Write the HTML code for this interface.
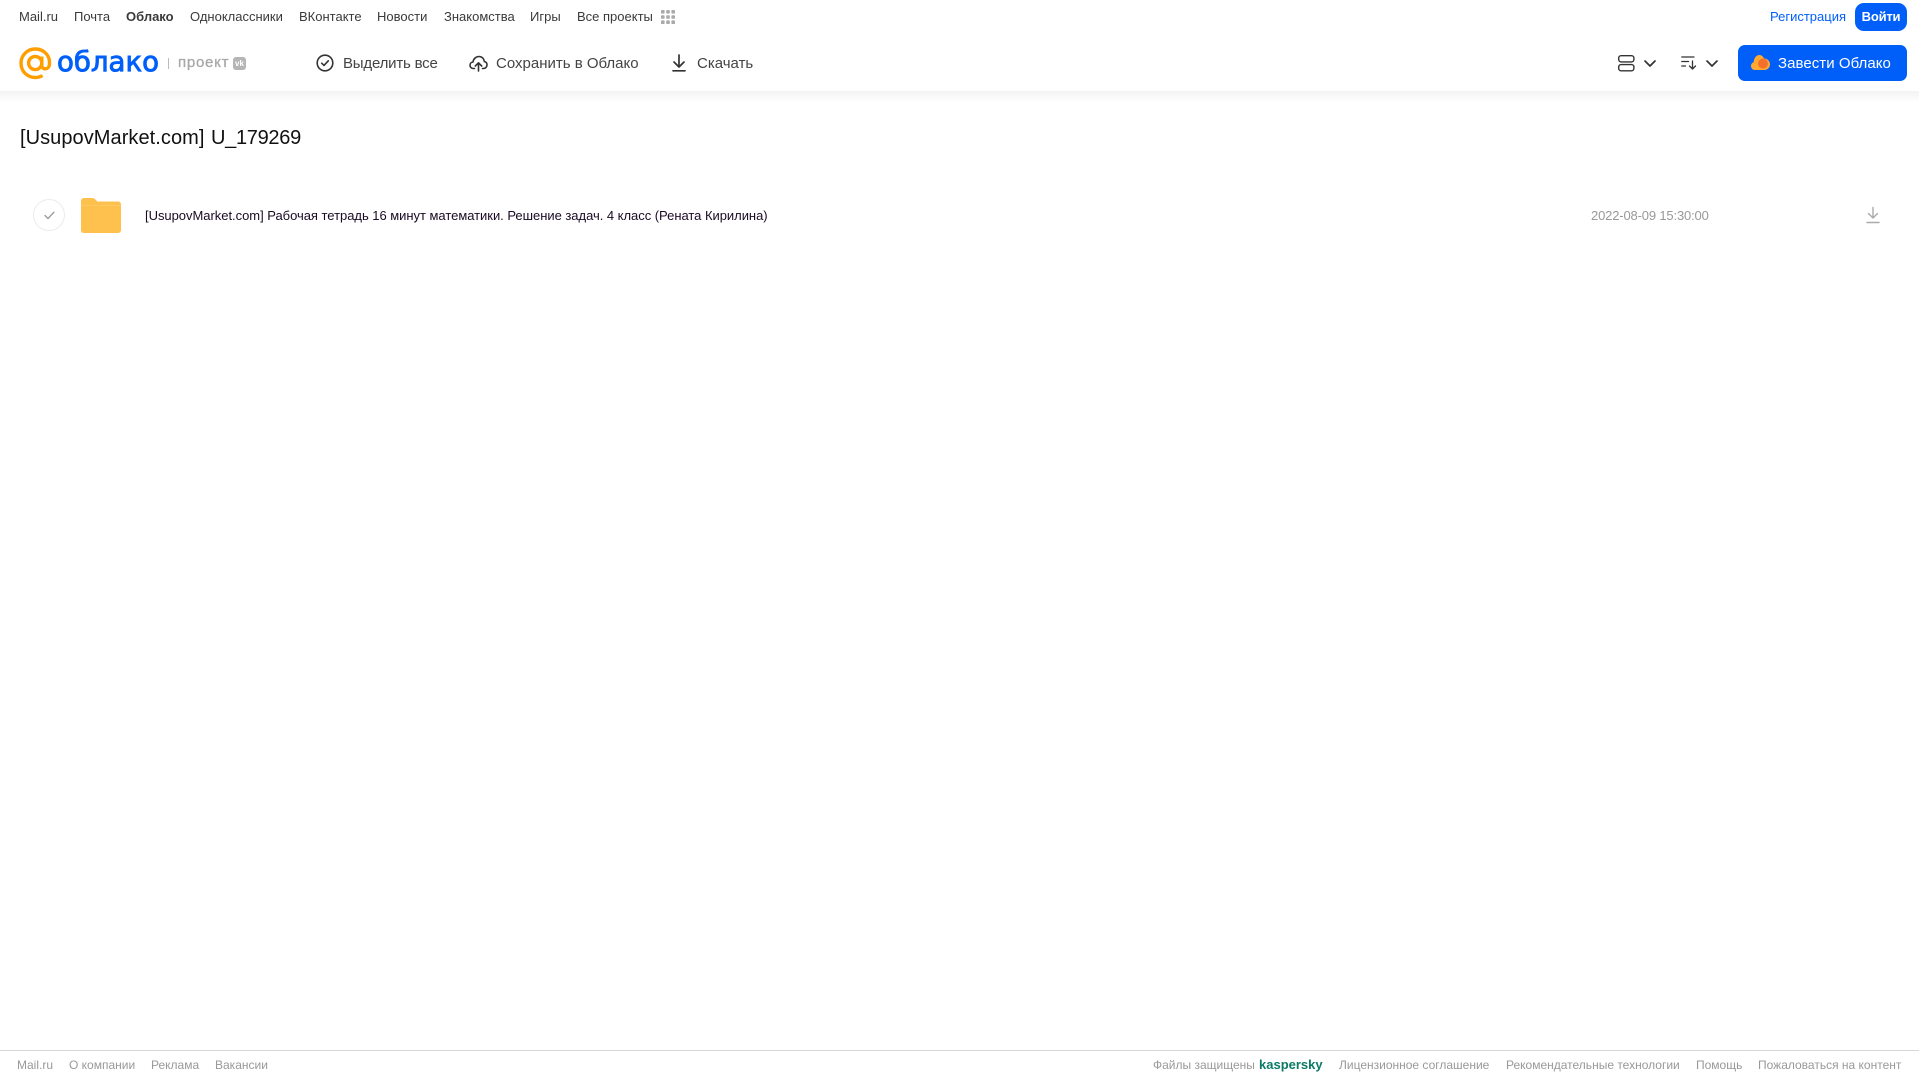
<!DOCTYPE html>
<html lang="ru">
<head>
<meta charset="utf-8">
<title>Облако</title>
<style>
html,body{margin:0;padding:0;background:#fff;}
body{width:1919px;height:1079px;position:relative;overflow:hidden;font-family:"Liberation Sans",Arial,sans-serif;}
.t{position:absolute;white-space:nowrap;line-height:20px;height:20px;}
.n{top:7px;font-size:13px;color:#3a3a3a;}
.b{top:54px;font-size:15px;color:#444;}
.f{top:1055px;font-size:12px;color:#999;}
svg{position:absolute;overflow:visible;}
</style>
</head>
<body>
<div style="position:absolute;left:0;top:91px;width:1919px;height:12px;background:linear-gradient(#f3f3f3,#fff);"></div>

<span class="t n" style="left:19px">Mail.ru</span>
<span class="t n" style="left:74px">Почта</span>
<span class="t n" style="left:126px;font-weight:bold">Облако</span>
<span class="t n" style="left:190px">Одноклассники</span>
<span class="t n" style="left:299px">ВКонтакте</span>
<span class="t n" style="left:377px">Новости</span>
<span class="t n" style="left:444px">Знакомства</span>
<span class="t n" style="left:530px">Игры</span>
<span class="t n" style="left:577px">Все проекты</span>
<svg style="left:661px;top:10px" width="14" height="14" viewBox="0 0 14 14" fill="#aaa">
<rect x="0" y="0" width="3.6" height="3.6" rx=".8"/><rect x="5.2" y="0" width="3.6" height="3.6" rx=".8"/><rect x="10.4" y="0" width="3.6" height="3.6" rx=".8"/>
<rect x="0" y="5.2" width="3.6" height="3.6" rx=".8"/><rect x="5.2" y="5.2" width="3.6" height="3.6" rx=".8"/><rect x="10.4" y="5.2" width="3.6" height="3.6" rx=".8"/>
<rect x="0" y="10.4" width="3.6" height="3.6" rx=".8"/><rect x="5.2" y="10.4" width="3.6" height="3.6" rx=".8"/><rect x="10.4" y="10.4" width="3.6" height="3.6" rx=".8"/>
</svg>

<span class="t n" style="left:1770px;color:#005ff9">Регистрация</span>
<div style="position:absolute;left:1855px;top:3px;width:52px;height:28px;background:#005ff9;border-radius:9px;color:#fff;font-size:13px;font-weight:bold;line-height:27px;text-align:center;letter-spacing:-.2px;">Войти</div>

<!-- logo -->
<svg style="left:19px;top:47px" width="33" height="33" viewBox="0 0 33 33" fill="none" stroke="#ff9e00" stroke-width="3.4">
<circle cx="16.2" cy="16" r="6.6"/>
<path d="M22.8 9.5V18.5C22.8 23 29.8 23.3 30.4 17.5C31.5 8.5 24.8 2 16.2 2C8.2 2 2 8.5 2 16.2C2 24.5 8.5 30.5 16.2 30.5C19 30.5 21.5 29.8 23.5 28.5"/>
</svg>
<svg style="left:56px;top:44px" width="106" height="36">
<text x="1" y="27" font-family="'DejaVu Sans',sans-serif" font-size="28" fill="#005ff9" stroke="#005ff9" stroke-width=".9" textLength="102" lengthAdjust="spacingAndGlyphs">облако</text>
</svg>
<div style="position:absolute;left:168px;top:58px;width:1px;height:11px;background:#bbb;"></div>
<span class="t" style="left:178px;top:53px;font-size:15px;color:#a8a8a8;letter-spacing:.75px;-webkit-text-stroke:.3px #a8a8a8;">проект</span>
<div style="position:absolute;left:233px;top:57px;width:13px;height:13px;background:#b5b5b5;border-radius:3px;color:#fff;font-size:8px;font-weight:bold;line-height:13px;text-align:center;">vk</div>

<!-- toolbar -->
<svg style="left:316px;top:54px" width="18" height="18" viewBox="0 0 18 18" fill="none" stroke="#333" stroke-width="1.6">
<circle cx="9" cy="9" r="7.8"/><path d="M5.7 9.2L8 11.4L12.3 6.8" stroke-linecap="round" stroke-linejoin="round"/>
</svg>
<span class="t b" style="left:343px;letter-spacing:-.2px">Выделить все</span>
<svg style="left:469px;top:54px" width="19" height="18" viewBox="0 0 19 18" fill="none" stroke="#333" stroke-width="1.6" stroke-linecap="round" stroke-linejoin="round">
<path d="M5.5 14.5H4.5C2.5 14.5 1 13 1 11.2C1 9.4 2.4 8.1 4 8C4.4 5 6.8 2.5 10 2.5C13 2.5 15 4.8 15.3 7.5C17 7.9 18 9.3 18 10.9C18 12.9 16.5 14.5 14.5 14.5H13.5"/>
<path d="M9.5 17V9M6.3 12L9.5 8.8L12.7 12"/>
</svg>
<span class="t b" style="left:496px">Сохранить в Облако</span>
<svg style="left:672px;top:54px" width="14" height="18" viewBox="0 0 14 18" fill="none" stroke="#333" stroke-width="1.7" stroke-linecap="round" stroke-linejoin="round">
<path d="M7 1V12.5M2 8L7 13L12 8"/><path d="M1 16.8H13"/>
</svg>
<span class="t b" style="left:697px">Скачать</span>

<!-- right controls -->
<svg style="left:1618px;top:55px" width="17" height="17" viewBox="0 0 17 17" fill="none" stroke="#333" stroke-width="1.4">
<rect x=".7" y=".7" width="15.2" height="6.2" rx="2.4"/><rect x=".7" y="9.6" width="15.2" height="6.2" rx="2.4"/>
</svg>
<svg style="left:1644px;top:60px" width="12" height="7" viewBox="0 0 12 7" fill="none" stroke="#333" stroke-width="1.7" stroke-linecap="round" stroke-linejoin="round"><path d="M1 1L6 6L11 1"/></svg>
<svg style="left:1681px;top:56px" width="17" height="14" viewBox="0 0 17 14" fill="none" stroke="#333" stroke-width="1.3" stroke-linecap="round" stroke-linejoin="round">
<path d="M.8 1H13M.8 5.5H7.5M.8 10H4.5"/><path d="M11.5 5V13M8.5 10L11.5 13L14.5 10"/>
</svg>
<svg style="left:1706px;top:60px" width="12" height="7" viewBox="0 0 12 7" fill="none" stroke="#333" stroke-width="1.7" stroke-linecap="round" stroke-linejoin="round"><path d="M1 1L6 6L11 1"/></svg>

<div style="position:absolute;left:1738px;top:45px;width:169px;height:36px;background:#005ff9;border-radius:7px;"></div>
<svg style="left:1751px;top:54px" width="19" height="17" viewBox="0 0 19 17">
<path d="M4 16C1.8 16 0 14.3 0 12C0 10.2 1.1 8.8 2.6 8.3C2.8 4.3 5.3 1 8.3 1C10.5 1 12.2 2.4 13 4.5C16.3 4.5 19 7 19 10.3C19 13.5 16.5 16 13.3 16Z" fill="#ffa930"/>
<circle cx="12" cy="9.6" r="5" fill="#f4702a"/>
</svg>
<span class="t" style="left:1778px;top:54px;font-size:15px;color:#fff;letter-spacing:.05px;">Завести Облако</span>

<!-- title -->
<span class="t" style="left:20px;top:124px;font-size:20px;line-height:28px;height:28px;color:#111;letter-spacing:.06px;">[UsupovMarket.com]</span>
<span class="t" style="left:211px;top:124px;font-size:20px;line-height:28px;height:28px;color:#111;letter-spacing:-.3px;">U_179269</span>

<!-- row -->
<div style="position:absolute;left:33px;top:199px;width:30px;height:30px;border:1px solid #ececec;border-radius:50%;"></div>
<svg style="left:44px;top:211px" width="11" height="9" viewBox="0 0 11 9" fill="none" stroke="#999" stroke-width="1.3" stroke-linecap="round" stroke-linejoin="round"><path d="M1 4.5L4 7.5L10 1.2"/></svg>
<svg style="left:81px;top:198px" width="40" height="35" viewBox="0 0 40 35">
<path d="M0 3C0 1.3 1.3 0 3 0H11C12.5 0 13.5 .6 14.5 1.6L16.5 3.5H37C38.7 3.5 40 4.8 40 6.5V32C40 33.7 38.7 35 37 35H3C1.3 35 0 33.7 0 32Z" fill="#ffc14d"/>
<path d="M0 8H40V7.2H0Z" fill="#ffcb68"/>
</svg>
<span class="t" style="left:145px;top:206px;font-size:13px;color:#1a0a24;letter-spacing:-.03px;">[UsupovMarket.com] Рабочая тетрадь 16 минут математики. Решение задач. 4 класс (Рената Кирилина)</span>
<span class="t" style="left:1591px;top:206px;font-size:13px;color:#999;letter-spacing:-.16px;">2022-08-09 15:30:00</span>
<svg style="left:1866px;top:206px" width="14" height="18" viewBox="0 0 14 18" fill="none" stroke="#aaa" stroke-width="1.4" stroke-linecap="round" stroke-linejoin="round">
<path d="M7 1.5V12M2.5 7.5L7 12L11.5 7.5"/><path d="M1 16.5H13"/>
</svg>

<!-- footer -->
<div style="position:absolute;left:0;top:1050px;width:1919px;height:1px;background:#d8d8d8;"></div>
<span class="t f" style="left:17px">Mail.ru</span>
<span class="t f" style="left:69px">О компании</span>
<span class="t f" style="left:151px">Реклама</span>
<span class="t f" style="left:215px">Вакансии</span>
<span class="t f" style="left:1153px">Файлы защищены</span>
<span class="t f" style="left:1259px;font-size:13px;font-weight:bold;color:#0b7a66;">kaspersky</span>
<span class="t f" style="left:1339px">Лицензионное соглашение</span>
<span class="t f" style="left:1506px">Рекомендательные технологии</span>
<span class="t f" style="left:1696px">Помощь</span>
<span class="t f" style="left:1758px">Пожаловаться на контент</span>
</body>
</html>
